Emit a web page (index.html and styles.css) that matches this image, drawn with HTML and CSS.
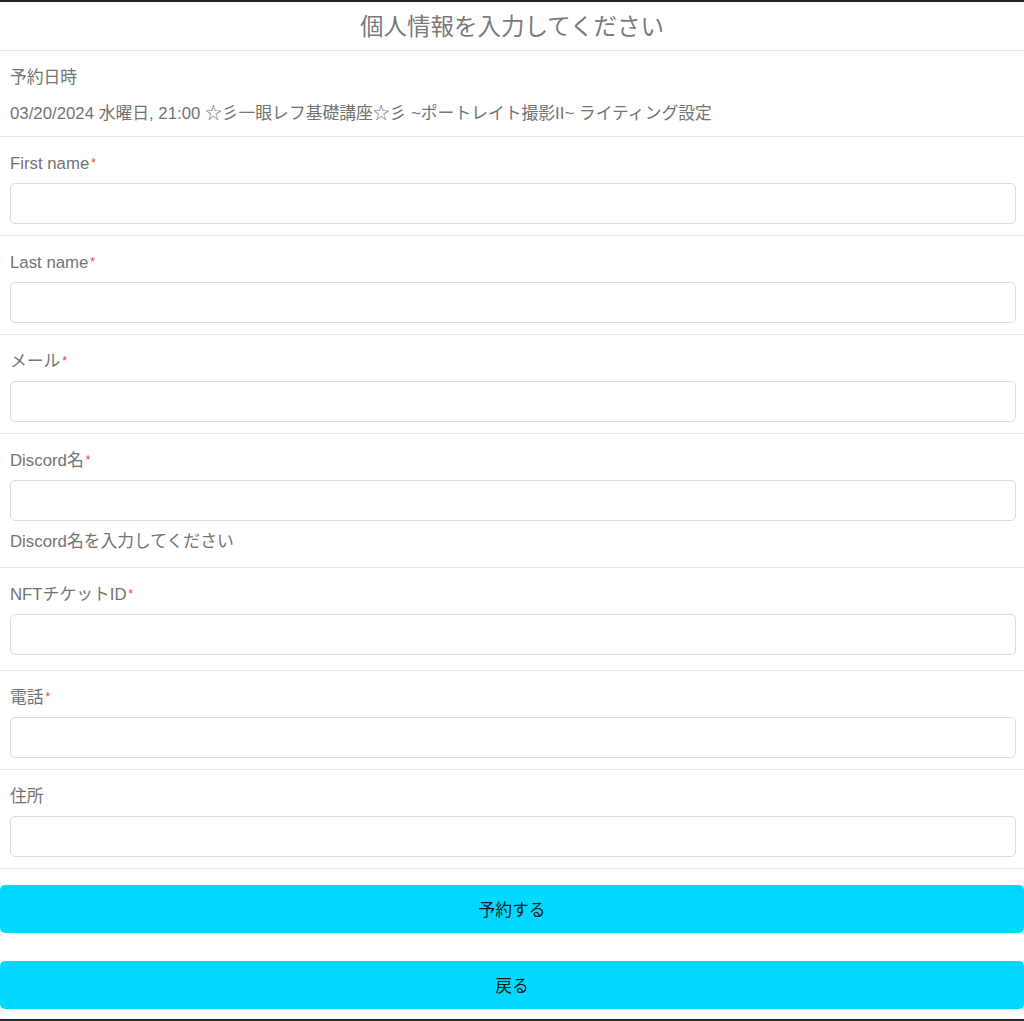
FILE: index.html
```html
<!DOCTYPE html>
<html lang="ja">
<head>
  <meta charset="UTF-8">
  <meta name="viewport" content="width=device-width, initial-scale=1.0">
  <title>個人情報を入力してください</title>
  <link rel="stylesheet" href="styles.css">
</head>
<body>
  <div class="page">
    <header class="title">個人情報を入力してください</header>

    <div class="section">
      <div class="label">予約日時</div>
      <div class="date">03/20/2024 水曜日, 21:00 ☆彡一眼レフ基礎講座☆彡 ~ポートレイト撮影II~ ライティング設定</div>
    </div>

    <form>
      <div class="section">
        <label class="label">First name<span class="req">*</span></label>
        <input type="text" class="input">
      </div>

      <div class="section">
        <label class="label">Last name<span class="req">*</span></label>
        <input type="text" class="input">
      </div>

      <div class="section">
        <label class="label">メール<span class="req">*</span></label>
        <input type="email" class="input">
      </div>

      <div class="section">
        <label class="label">Discord名<span class="req">*</span></label>
        <input type="text" class="input">
        <div class="help">Discord名を入力してください</div>
      </div>

      <div class="section section-tall">
        <label class="label">NFTチケットID<span class="req">*</span></label>
        <input type="text" class="input">
      </div>

      <div class="section">
        <label class="label">電話<span class="req">*</span></label>
        <input type="tel" class="input">
      </div>

      <div class="section">
        <label class="label">住所</label>
        <input type="text" class="input">
      </div>

      <button type="button" class="button button-first">予約する</button>
      <button type="button" class="button">戻る</button>
    </form>
  </div>
</body>
</html>
```

FILE: styles.css
```css
* {
  box-sizing: border-box;
}
body {
  margin: 0;
  padding: 0;
  background: white;
  font-family: "Liberation Sans", "Noto Sans CJK JP", sans-serif;
  color: #737373;
}
.page {
  min-height: 1021px;
  border-top: 2px solid #262626;
  border-bottom: 2px solid #262626;
}
.title {
  height: 49px;
  padding-top: 1px;
  line-height: 48px;
  text-align: center;
  font-size: 23.5px;
  color: #7a7a7a;
  border-bottom: 1px solid #e6e6e6;
  overflow: hidden;
}
.section {
  padding: 17px 8px 11px 10px;
  border-bottom: 1px solid #e6e6e6;
}
.section-tall {
  padding-bottom: 15px;
}
.label {
  display: block;
  height: 20px;
  font-size: 16.8px;
  line-height: 20px;
  margin-bottom: 9px;
  white-space: nowrap;
}
.date {
  height: 20px;
  font-size: 16.8px;
  line-height: 20px;
  margin-top: 16px;
  margin-bottom: 1px;
  white-space: nowrap;
}
.req {
  color: #f33;
  font-size: 12px;
  line-height: 0;
  margin-left: 2px;
  position: relative;
  top: -2px;
}
.input {
  display: block;
  width: 100%;
  height: 41px;
  border: 1.5px solid #dcdcdc;
  border-radius: 5px;
  background: white;
  font-size: 16px;
  padding: 0 10px;
  outline: none;
}
.help {
  height: 20px;
  font-size: 16.8px;
  line-height: 20px;
  margin-top: 11px;
  margin-bottom: 4px;
}
.button {
  display: block;
  width: 100%;
  height: 48px;
  margin-top: 28px;
  padding-bottom: 2px;
  background: #00d8ff;
  color: #1a1a1a;
  border: none;
  border-radius: 5px;
  font-family: "Liberation Sans", "Noto Sans CJK JP", sans-serif;
  font-size: 16.8px;
  cursor: pointer;
}
.button-first {
  margin-top: 16px;
}
```
